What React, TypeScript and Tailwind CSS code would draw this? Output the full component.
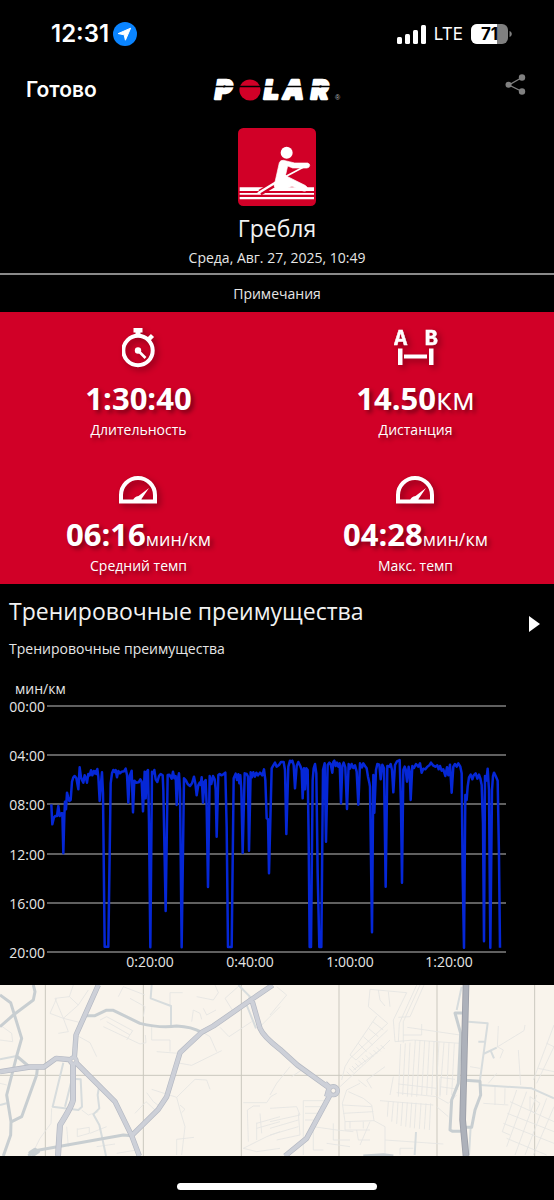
import React from "react";

type TraceSegment = { x: number; y: number; points: string };

// Pace samples, in thirds of a chart unit, each run relative to its own origin.
const trace: TraceSegment[] = [
  {
    x: 0,
    y: 0,
    points:
      "154,343 157,403 162,382 166,378 171,378 175,348 179,378 184,370 187,370 190,490 193,378 195,335 198,358 201,308 204,320 208,333 212,330 216,275 220,262 224,258 229,264 235,298 239,232 243,262 247,272 250,278 254,256 258,265 261,278 265,252 269,256 273,241 277,256 281,243 284,250 287,243 289,252 292,237 295,260 299,333 302,290 306,247 309,310 314,770 325,770 332,280 336,250 340,240 344,246 347,240 351,262 355,243 360,250 365,245 372,244 377,236 381,255 385,338 389,258 395,242 399,367 403,272 408,278 416,277 421,268 425,275 429,364 434,245 437,325 441,245 444,240 447,400 451,772 456,245 460,250 463,240 467,268 472,276 477,258 482,252 488,256 490,300 497,663 503,255 508,254 515,266 519,245 523,265 527,258 530,345 534,265 537,250 540,300 545,772",
  },
  {
    x: 540,
    y: 150,
    points:
      "12,115 18,122 23,132 30,138 36,130 42,110 46,130 50,166 55,135 59,128 62,135 65,112 69,188 73,125 77,120 80,200 84,441 89,108 94,132 99,108 104,118 107,150 110,290 115,105 119,102 124,106 130,103 136,98 140,260 144,621 155,621 161,115 167,101 171,120 175,103 178,130 181,106 184,150 188,339 194,100 200,102 204,110 207,332 212,97 216,112 220,97 225,110 229,98 234,106 240,98 247,106 252,88 256,120 260,235 264,238 267,400 275,85 280,76 285,68 290,80 297,75 303,66 311,66 315,90 319,282 325,80 330,62 334,66 337,62 341,75 345,145 350,78 355,66 361,78 365,90 368,175 372,85 375,148 379,85 383,90 386,300 389,621 393,621 398,120 401,85 405,72 409,100 413,400 418,621 424,621 429,90 434,70 438,305 443,75 448,68 452,72 457,98 460,66 463,62 467,78 471,68 475,80 479,70 483,190 487,78 491,68 496,82 501,207 506,72 510,86 515,72 520,84 525,76 530,95 535,194 540,70 546,82 550,70 555,78 560,85 564,110 568,128",
  },
  {
    x: 1050,
    y: 150,
    points:
      "60,140 66,577 70,105 73,218 78,90 82,72 88,74 92,118 97,74 102,85 107,440 112,78 118,80 122,72 126,90 130,157 135,75 141,64 149,60 153,200 156,428 160,90 164,80 167,88 171,125 176,80 179,95 182,180 187,78 192,84 198,72 205,80 210,70 215,98 220,86 226,88 232,80 238,76 243,68 249,76 256,80 262,76 266,88 270,78 275,92 280,88 286,108 291,82 295,106 300,74 305,158 310,80 315,72 320,80 325,70 331,80 335,100 338,400 342,623 346,165 350,180 353,140 357,112 362,104 367,118 371,106 377,100 382,116 387,104 391,115 395,135 399,250 402,604 405,108 409,122 413,86 417,150 421,623 426,150 429,108 432,98 437,108 443,122 447,350 450,623",
  },
];

const tracePoints = trace
  .flatMap((s) =>
    s.points.split(" ").map((p) => {
      const [px, py] = p.split(",").map(Number);
      return `${px + s.x},${py + s.y}`;
    }),
  )
  .join(" ");

const paceTicks = [
  { label: "00:00", y: 31 },
  { label: "04:00", y: 80 },
  { label: "08:00", y: 129 },
  { label: "12:00", y: 179 },
  { label: "16:00", y: 228 },
  { label: "20:00", y: 277 },
];

const timeTicks = [
  { label: "0:20:00", x: 150 },
  { label: "0:40:00", x: 250 },
  { label: "1:00:00", x: 350 },
  { label: "1:20:00", x: 449 },
];

function StatusBar() {
  return (
    <div className="flex h-16 items-center justify-between pt-1 pr-[42px] pl-[51px] font-['Inter',sans-serif]">
      <div className="flex items-center gap-1">
        <span className="text-2xl leading-7 font-semibold">12:31</span>
        <svg viewBox="0 0 24 24" className="size-6" aria-hidden="true">
          <circle cx="12" cy="12" r="12" fill="#0a84ff" />
          <path d="M17.6 6.2 12.4 18.2 11.2 12.8 5.2 11.6Z" fill="#fff" stroke="#fff" strokeWidth="1" strokeLinejoin="round" />
        </svg>
      </div>
      <div className="flex items-center gap-2">
        <svg viewBox="0 0 29 19" className="h-[19px] w-[29px]" fill="#fff" aria-hidden="true">
          <rect x="0" y="12" width="5" height="7" rx="1.5" />
          <rect x="8" y="9" width="5" height="10" rx="1.5" />
          <rect x="16" y="5" width="5" height="14" rx="1.5" />
          <rect x="24" y="0" width="5" height="19" rx="1.5" />
        </svg>
        <span className="text-[17px] leading-6">LTE</span>
        <svg viewBox="0 0 41 20" className="h-5 w-[41px]" role="img" aria-label="71%">
          <defs>
            <clipPath id="charge">
              <rect width="26" height="20" />
            </clipPath>
          </defs>
          <rect width="37" height="20" rx="6" fill="#808080" />
          <rect width="37" height="20" rx="6" fill="#fff" clipPath="url(#charge)" />
          <path d="M38.5 7c3 1 3 5 0 6Z" fill="#808080" />
          <text x="18.500" y="16" textAnchor="middle" fontSize="17" fontWeight="700" fill="#000">
            71
          </text>
        </svg>
      </div>
    </div>
  );
}

function PolarLogo() {
  return (
    <svg viewBox="-4 -6 138 36" className="h-9 w-[138px]" role="img" aria-label="Polar">
      <g
        fill="#fff"
        stroke="#fff"
        strokeWidth="2.400"
        strokeLinejoin="round"
        fontFamily="Inter"
        fontWeight="900"
        fontStyle="italic"
        fontSize="26"
      >
        <text x="3" y="21">P</text>
        <text x="52" y="21">L</text>
        <text x="71" y="21">A</text>
        <text x="99" y="21">R</text>
      </g>
      <circle cx="38" cy="12" r="10.600" fill="#d10027" />
      <path d="M-2 8.500h130" stroke="#000" strokeWidth="1.600" />
      <text x="123" y="22" fontSize="7" fill="#bbb" fontFamily="Liberation Sans">®</text>
    </svg>
  );
}

function Header() {
  return (
    <header className="grid h-[52px] grid-cols-3 items-center px-[26px]">
      <button type="button" className="justify-self-start font-['Inter',sans-serif] text-[21px] leading-7 font-semibold">
        Готово
      </button>
      <div className="justify-self-center">
        <PolarLogo />
      </div>
      <button type="button" aria-label="Поделиться" className="justify-self-end pr-0.5 pb-3">
        <svg viewBox="0 0 21 21" className="size-[21px]" fill="#808080" stroke="#808080">
          <path d="M17 3.500 4 11l13 6.500" fill="none" strokeWidth="1.300" />
          <circle cx="3.500" cy="10.800" r="3" stroke="none" />
          <circle cx="17" cy="3.500" r="3.200" stroke="none" />
          <circle cx="17" cy="17.500" r="3.200" stroke="none" />
        </svg>
      </button>
    </header>
  );
}

function RowingIcon() {
  return (
    <svg viewBox="0 0 234 234" className="size-[78px]" aria-hidden="true">
      <rect width="234" height="234" rx="16" fill="#d10027" />
      <path d="M5 178h223v11H5zM5 195h223v5H5zM5 207h223v7H5z" fill="#fff" />
      <path d="M66 194 112 166" stroke="#d10027" strokeWidth="18" />
      <path d="M60 196 114 163" stroke="#fff" strokeWidth="7" />
      <circle cx="146" cy="74" r="18" fill="#fff" />
      <path
        d="M124 104q3-8 12-7l18 4 16 4h39q7 2 6 8t-8 7h-43l-15-6-6 26 6 6 52 26q9 5 7 12t-12 5l-34-14-22 9q-16 7-26-1t-3-21Z"
        fill="#fff"
        stroke="#fff"
        strokeWidth="2"
        strokeLinejoin="round"
      />
      <path d="M146 144 204 113" stroke="#fff" strokeWidth="5" />
    </svg>
  );
}

const iconShadow = "drop-shadow-[3px_3px_3px_rgba(0,0,0,0.35)]";

function StopwatchIcon() {
  return (
    <svg viewBox="0 0 34 40" className={`h-10 w-[34px] ${iconShadow}`} fill="none" stroke="#fff" aria-hidden="true">
      <circle cx="16" cy="22.500" r="14.700" strokeWidth="4" />
      <path d="M11.500 0h9v4.500h-2V8h-5V4.500h-2z" fill="#fff" stroke="none" />
      <path d="m26 12 4.500-4.500" strokeWidth="4.500" />
      <circle cx="16" cy="22.500" r="3.200" fill="#fff" stroke="none" />
      <path d="m16 22.500 7.500 7.500" strokeWidth="2.700" />
    </svg>
  );
}

function DistanceIcon() {
  return (
    <svg viewBox="1 0 44 40" className={`h-10 w-11 ${iconShadow}`} fill="#fff" aria-hidden="true">
      <g
        fontFamily="Liberation Mono"
        fontWeight="700"
        fontSize="22"
        textAnchor="middle"
        stroke="#fff"
        strokeWidth="0.500"
      >
        <text x="7.500" y="17">A</text>
        <text x="38" y="17">B</text>
      </g>
      <path d="M5 20.500h4.500V37H5zM36 20.500h4.500V37H36zM11 26.500h23v4H11z" />
    </svg>
  );
}

function PaceIcon() {
  return (
    <svg viewBox="1 0 38 28" className={`h-7 w-[38px] overflow-visible ${iconShadow}`} aria-hidden="true">
      <path d="M2 25.500V19a17 17 0 0 1 34 0v6.500Z" fill="none" stroke="#fff" strokeWidth="4" />
      <path d="M14 24.500q1-4 5.500-4.500L30 12 22.500 23v2Z" fill="#fff" />
    </svg>
  );
}

type StatProps = { icon: React.ReactNode; value: string; unit?: string; unitClass?: string; label: string };

function Stat({ icon, value, unit, unitClass, label }: StatProps) {
  return (
    <div className="flex flex-col items-center">
      {icon}
      <p className="mt-[10px] text-[31px] leading-10 text-shadow-[3px_3px_4px_rgba(0,0,0,0.4)]">
        <span className="font-bold">{value}</span>
        {unit && <span className={unitClass}>{unit}</span>}
      </p>
      <p className="mt-0.5 text-sm leading-5 text-shadow-[3px_3px_4px_rgba(0,0,0,0.4)]">{label}</p>
    </div>
  );
}

function PaceChart() {
  return (
    <svg viewBox="0 0 554 310" className="mt-4 block w-full" role="img" aria-label="мин/км">
      <g stroke="#808080" strokeWidth="1.400">
        {paceTicks.map((t) => (
          <path key={t.label} d={`M47 ${t.y}H506`} />
        ))}
      </g>
      <g fill="#e6e6e6" fontSize="14">
        <text x="15" y="19">мин/км</text>
        {paceTicks.map((t) => (
          <text key={t.label} x="45" y={t.y + 6} textAnchor="end">
            {t.label}
          </text>
        ))}
        {timeTicks.map((t) => (
          <text key={t.label} x={t.x} y="292" textAnchor="middle">
            {t.label}
          </text>
        ))}
      </g>
      <g transform="translate(0 15) scale(0.33333)">
        <polyline points={tracePoints} fill="none" stroke="#0527d6" strokeWidth="7.500" strokeLinejoin="round" />
      </g>
    </svg>
  );
}

function RouteMap() {
  return (
    <svg viewBox="0 0 1662 513" className="block w-full bg-[#f9f4ec]" role="img" aria-label="Карта">
      <g transform="translate(0 -15)" fill="none" strokeLinejoin="round">
        <path d="M136 0V540M430 0V540M724 0V540M1017 0V540M1311 0V540M1604 0V540M0 286H1662" stroke="#cbc8bf" strokeWidth="3" />
        <g stroke="#e5e4e2" strokeWidth="2.500">
          <path d="M220 15 208 50 165 55 190 115 150 100 170 55M208 50 235 75 190 115 250 130M265 30 235 75M190 115 205 155 175 160M228 165 270 188 290 230M355 50 370 20 435 45M390 55 435 80 430 110M300 120 320 110 398 152 380 180M310 140 420 192 438 188 436 165M320 125 390 165M455 140V180H510V215M470 215 535 220M510 75V38H548M575 125 580 90 600 100 605 118M645 15 655 38 640 60 590 50M675 55 720 15 755 60M675 55 700 95M610 85 620 105 648 90M660 142 687 170 755 125M610 158 630 170 650 215M665 212 575 256 530 248M780 140 840 80M0 135 35 160 38 185 0 180M0 310 20 315" />
          <path d="M455 328 530 352 585 298 620 300 630 328M530 352 540 390 555 440 545 525M540 375 555 388 545 398M530 525V478L582 472M440 338 460 365 480 380M405 400 438 365 465 390M232 448 268 442 268 460 232 470V445M245 390 265 405 295 395M155 385 153 430 120 475 100 515M200 440 205 500M270 460 320 440M730 368H800L812 350 830 340M730 505 800 470 840 455M745 485 742 390 760 378H780M770 428V480M770 430 840 410M770 445 840 425M785 460 780 400M840 505 770 515 730 505M350 520 410 510M290 500 345 492" />
        </g>
        <g transform="translate(810 0)" stroke="#e5e4e2" strokeWidth="2.500">
          <path d="M20 20 50 45 0 105M300 28 410 38 370 120 375 185M300 28 295 80 353 130 240 235 225 260 215 300M325 30 330 60 345 78M355 35 360 80M320 108 240 225 258 240 353 150M308 125 340 150M295 145 325 170M280 170 308 195M265 190 290 215M440 15 388 130 385 185M450 15 400 125V188M462 15 420 110 385 112M412 142 570 165M375 185 430 180 570 190M455 132V165H400M340 200 210 320M360 180 330 210 250 270" />
          <path d="M392 192 385 350M406 190 398 345M420 188 412 350M436 180 425 350M450 180 440 350M464 182 455 345M478 183 470 345M492 184 485 345M507 185 498 345M522 187 510 345M537 188 530 345M553 190 545 345M385 312 500 325M370 290 360 345M380 338 500 350" />
          <path d="M355 365 352 410M370 365 365 425M384 366 380 432M398 366 393 438M412 367 407 440M425 368 420 443M438 368 433 445M453 369 448 447M468 370 463 448M482 370 478 450M330 362 490 375M510 320 565 328M510 292 555 298M500 350 535 370 560 345M510 295V350M500 380 535 410" />
          <path d="M230 275 240 285M238 265 250 278M246 258 258 270M256 250 268 262M265 242 277 254M276 234 288 246M287 226 299 238M298 218 310 230M310 210 322 222M320 202 332 214M332 195 344 207M345 260 290 300 305 325M270 310 230 330 217 370 225 425 225 450H300M265 300 290 320M235 335 280 355 305 375 312 422 225 425M218 375 305 380M220 400 310 395M240 425V445M280 425V445M312 422 345 440V525M260 450 265 480 300 480M300 425 270 495M345 480 520 492M390 525V505H430M0 385 80 380 90 405 0 425M100 362H170M100 362V525M105 380H160M105 400H150M105 420H140M130 440 200 450 250 455M130 440V510H160M190 430V480H240M0 445 85 420M0 465 85 440M20 480 90 465 85 400M170 490 240 500M0 345 20 310 60 260M65 290 95 270" />
          <path d="M685 138 682 200 700 210 690 235M765 135 762 152 680 202M745 210 752 315M675 320V375M640 370 715 375M705 325 704 372M600 260 630 265M655 310 680 280M852 135 790 300M852 200 800 310M740 330 697 455 720 465M770 335 710 500M800 345 735 525M830 355 765 525M852 380 790 525M720 365 852 425M712 400 852 455M700 430 852 490M710 475 830 525M830 190 852 200M805 265 852 275M780 350 810 370 795 400 780 390Z" />
        </g>
        <g stroke="#d7dcdd" strokeWidth="6">
          <path d="M455 15 452 55 513 78V138M715 15 750 50 740 75 768 145M190 248 158 380 235 390 246 380 242 298 212 296M215 300 195 380M298 315 293 345 298 385 280 403 298 435 308 480 318 528M0 238 50 228M0 375 20 370" />
          <path d="M1405 125 1463 130 1440 300M1435 185H1453M1450 222 1490 203M1472 212 1482 235M1440 315 1595 325 1662 355M1248 456 1244 525M1412 440 1407 525M1385 20 1370 90" />
        </g>
        <g stroke="#c8ced1" strokeWidth="9">
          <path d="M0 45 32 68 65 175 50 228 20 345 33 425 32 465 10 528M100 15 105 35 100 60 40 105 0 140M50 228 85 258M112 265 110 285 65 410 35 425M260 107H285L318 91H340L420 130Q480 145 530 138 575 140 605 157M85 528 105 512 370 465 395 467" />
          <path d="M1390 99H1365L1382 160 1375 310 1355 360 1350 450 1358 454H1390M1395 301 1440 304 1442 345 1425 390 1415 442H1395M1090 528 1150 524 1180 528" />
        </g>
        <path d="M90 518 105 508 115 515 100 525Z" stroke="#c8ced1" strokeWidth="10" />
        {[
          { color: "#b4b8c2", extra: 4 },
          { color: "#cdd0d8", extra: 0 },
        ].map(({ color, extra }) => (
          <g key={color} stroke={color}>
            <path
              strokeWidth={12 + extra}
              d="M295 15 228 165 223 235M0 275 90 261H132L168 235 220 240 345 365 395 467 418 528M818 15 755 58 640 138 605 157 540 218 500 350 475 388 395 467M755 58 780 145Q790 170 840 208L892 255 985 322M990 345 920 475 855 528"
            />
            <path strokeWidth={14 + extra} d="M219 245V360Q215 380 180 435L174 528" />
            <circle strokeWidth={10 + extra} cx="220" cy="242" r="9" />
            <path strokeWidth={12 + extra} d="M975 310 988 322 980 350" />
            <circle strokeWidth={10 + extra} cx="1000" cy="332" r="13" />
          </g>
        ))}
        <circle cx="1000" cy="332" r="7" fill="#f9f4ec" stroke="#b4b8c2" strokeWidth="2" />
        <circle cx="220" cy="242" r="4" fill="#f9f4ec" stroke="#b4b8c2" strokeWidth="2" />
        <path d="M1398 15 1388 420 1398 528" stroke="#9a9da7" strokeWidth="20" />
        <path d="M1398 15 1388 420 1398 528" stroke="#adb1ba" strokeWidth="15" />
      </g>
    </svg>
  );
}

export default function App() {
  return (
    <div className="min-h-screen bg-black font-['Open_Sans','Noto_Sans',sans-serif] text-white">
      <StatusBar />
      <Header />
      <main>
        <section className="flex flex-col items-center border-b-2 border-[#8a8a8a] pt-3 pb-[5px]">
          <RowingIcon />
          <h1 className="mt-1.5 text-[23px] leading-8 text-[#f2f2f2]">Гребля</h1>
          <p className="mt-1 text-sm leading-5 text-[#e6e6e6]">Среда, Авг. 27, 2025, 10:49</p>
        </section>
        <p className="pt-[9px] pb-2 text-center text-sm leading-5 text-[#e6e6e6]">Примечания</p>

        <section className="grid grid-cols-2 gap-y-9 bg-[#d10027] pt-4 pb-2">
          <Stat icon={<StopwatchIcon />} value="1:30:40" label="Длительность" />
          <Stat icon={<DistanceIcon />} value="14.50" unit="км" label="Дистанция" />
          <Stat icon={<PaceIcon />} value="06:16" unit="мин/км" unitClass="text-lg" label="Средний темп" />
          <Stat icon={<PaceIcon />} value="04:28" unit="мин/км" unitClass="text-lg" label="Макс. темп" />
        </section>

        <section>
          <div className="flex items-start justify-between pt-[11px] pr-[14px] pl-[9px]">
            <div>
              <h2 className="text-[23px] leading-8 text-[#f2f2f2]">Тренировочные преимущества</h2>
              <p className="mt-3 text-sm leading-5 text-[#e6e6e6]">Тренировочные преимущества</p>
            </div>
            <button type="button" aria-label="Далее" className="mt-5">
              <svg viewBox="0 0 12 18" className="h-[18px] w-3" fill="#fff">
                <path d="M1 1v16l11-8z" />
              </svg>
            </button>
          </div>
          <PaceChart />
        </section>

        <RouteMap />
      </main>
      <div className="flex justify-center pt-[27px] pb-[10px]">
        <div className="h-[7px] w-[36%] rounded-full bg-white" />
      </div>
    </div>
  );
}
